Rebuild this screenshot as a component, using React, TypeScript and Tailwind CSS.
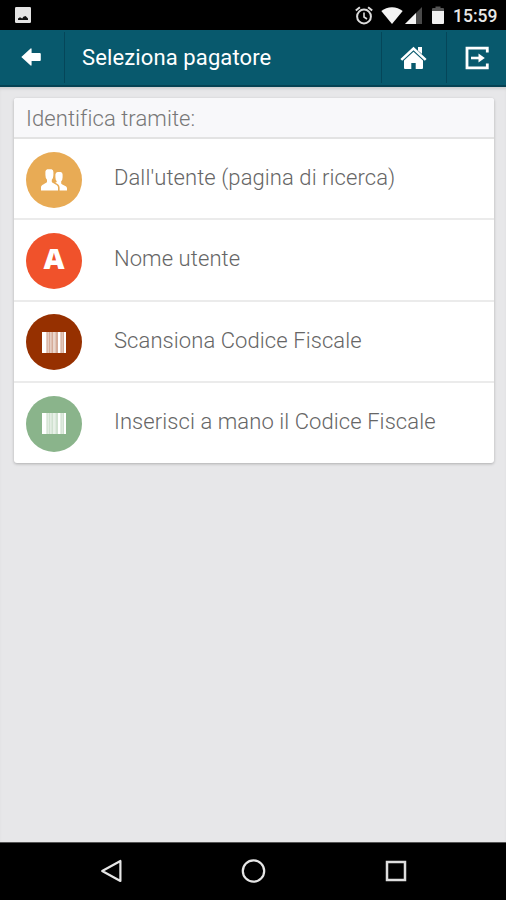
import type { ReactNode } from 'react';

const PictureIcon = () => (
  <svg className="w-4 h-4" viewBox="0 0 16 16">
    <rect width="16" height="16" rx="1.2" fill="#e4e4e4" />
    <path d="M3 13 V11.6 L5 10.2 L7.2 11.4 L8.4 9.8 L10.6 9 L13 11.6 V13 Z" fill="#111" />
  </svg>
);

const AlarmIcon = () => (
  <svg className="w-[18px] h-[19px]" viewBox="0 0 18 19" fill="none" stroke="#dcdcdc">
    <circle cx="9" cy="10.5" r="6.9" strokeWidth="2" />
    <path d="M9 6.5 V11 L12 13" strokeWidth="1.6" />
    <path d="M0.8 4.6 L4.9 1.2 M17.2 4.6 L13.1 1.2" strokeWidth="2" />
  </svg>
);

const WifiIcon = () => (
  <svg className="w-[22px] h-[17px]" viewBox="0 0 22 17">
    <path d="M11 17 L0.3 4 C3.2 1.6 7 0.2 11 0.2 C15 0.2 18.8 1.6 21.7 4 Z" fill="#f4f4f4" />
  </svg>
);

const SignalIcon = () => (
  <svg className="w-[17px] h-[17px]" viewBox="0 0 17 17">
    <path d="M17 0 V17 H0 Z" fill="#4a4a4a" />
    <path d="M11 6 V17 H0 Z" fill="#f4f4f4" />
  </svg>
);

const BatteryIcon = () => (
  <svg className="w-3 h-[18px]" viewBox="0 0 12 18">
    <path d="M3.5 0.5 H8.5 V2 H11 Q12 2 12 3 V5 H0 V3 Q0 2 1 2 H3.5 Z" fill="#555" />
    <path d="M0 5 H12 V17 Q12 18 11 18 H1 Q0 18 0 17 Z" fill="#f0f0f0" />
  </svg>
);

const BackIcon = () => (
  <svg className="w-5 h-[18px]" viewBox="0 0 20 18" fill="#fff">
    <path d="M0.3 9 L9.6 0.4 Q10.6 0 10.6 1.2 V5 H18.8 Q19.8 5 19.8 6 V12 Q19.8 13 18.8 13 H10.6 V16.8 Q10.6 18 9.6 17.6 Z" />
  </svg>
);

const HomeIcon = () => (
  <svg className="w-[27px] h-6" viewBox="0 0 27 24" fill="#fff">
    <path d="M13.5 0.8 L26.6 13 L24.8 14.8 L13.5 4.3 L2.2 14.8 L0.4 13 Z" />
    <path d="M18 1 H22 V8 L18 4.5 Z" />
    <path d="M4 14.4 L13.5 5.8 L23 14.4 V22 Q23 23 22 23 H15.7 V17 H11.3 V23 H5 Q4 23 4 22 Z" />
  </svg>
);

const ExitIcon = () => (
  <svg className="w-6 h-6" viewBox="0 0 24 24" fill="none" stroke="#fff">
    <path d="M22.3 6.5 V2.2 H2 V21.8 H22.3 V17.5" strokeWidth="2.8" />
    <path d="M6 12 H15.5" strokeWidth="2.6" />
    <path d="M13.5 7.6 L19.8 12 L13.5 16.4 Z" fill="#fff" stroke="none" />
  </svg>
);

const UsersIcon = () => (
  <svg className="w-[26px] h-[22px]" viewBox="0 0 26 22" fill="#fff">
    <path d="M6.2 0.2 H10.6 Q12.4 0.6 12.4 3 V6 Q12.4 9.4 10.8 10.8 V13 C11.4 14.6 17 15.4 17 18.4 V21.5 H0 V18.4 C0 15.4 5.4 14.6 6 13 V10.8 Q4.4 9.4 4.4 6 V2.6 Q4.6 0.8 6.2 0.2 Z" />
    <path d="M16.6 3 H19.6 Q21.6 3.4 21.6 5.6 V8.2 Q21.6 11 20.2 12.2 V14.4 C20.8 16 26 16.4 26 19.2 V21.5 H18.6 V18.4 C18.6 15.9 16.4 14.8 14.2 13.8 Q15.8 13.6 15.8 12.2 Q14.4 11 14.4 8.2 V5.4 Q14.6 3.4 16.6 3 Z" />
  </svg>
);

const BarcodeIcon = () => (
  <svg className="w-6 h-[21px]" viewBox="0 0 24 21" fill="#fff">
    <rect width="24" height="21" opacity="0.6" />
    <rect width="4.4" height="21" />
    <rect x="5.6" width="1.4" height="21" opacity="0.4" />
    <rect x="8" width="1.6" height="21" opacity="0.4" />
    <rect x="11" width="2.6" height="21" opacity="0.5" />
    <rect x="16" width="2.4" height="21" />
    <rect x="19.6" width="1.2" height="21" opacity="0.4" />
    <rect x="22" width="2" height="21" />
  </svg>
);

type Option = { label: string; color: string; icon: ReactNode };

const options: Option[] = [
  { label: "Dall'utente (pagina di ricerca)", color: 'bg-[#e8ab55]', icon: <UsersIcon /> },
  {
    label: 'Nome utente',
    color: 'bg-[#f0522b]',
    icon: <span className="font-['Open_Sans',sans-serif] text-[29px] leading-none font-extrabold -mt-1.5">A</span>,
  },
  { label: 'Scansiona Codice Fiscale', color: 'bg-[#963000]', icon: <BarcodeIcon /> },
  { label: 'Inserisci a mano il Codice Fiscale', color: 'bg-[#8ab48b]', icon: <BarcodeIcon /> },
];

const StatusBar = () => (
  <div className="h-[30px] bg-black flex items-center pl-[15px] pr-2.5 text-[#e8e8e8]">
    <PictureIcon />
    <div className="ml-auto flex items-center">
      <AlarmIcon />
      <div className="ml-2"><WifiIcon /></div>
      <div className="ml-0.5"><SignalIcon /></div>
      <div className="ml-2.5"><BatteryIcon /></div>
      <span className="ml-[9px] w-[43px] text-[17.5px] leading-none font-medium whitespace-nowrap pt-[3px]">15:59</span>
    </div>
  </div>
);

const AppBar = () => (
  <header className="h-[57px] bg-[#08596d] border-b-2 border-[#064253] flex text-white">
    <button className="w-[65px] my-0.5 pr-0.5 pb-0.5 flex items-center justify-center border-r border-[#054659]">
      <BackIcon />
    </button>
    <h1 className="flex-1 pl-[17px] pb-px flex items-center text-[22px] tracking-[0.12px] whitespace-nowrap">Seleziona pagatore</h1>
    <button className="w-[65px] my-0.5 pr-0.5 flex items-center justify-center border-l border-[#054659]">
      <HomeIcon />
    </button>
    <button className="w-[60px] my-0.5 flex items-center justify-center border-l border-[#054659]">
      <ExitIcon />
    </button>
  </header>
);

const NavBar = () => (
  <nav className="h-[58px] bg-black border-t border-[#555] pb-0.5 flex items-center">
    <svg className="ml-[100px] w-6 h-6" viewBox="0 0 24 24" fill="none" stroke="#e6e6e6" strokeWidth="2.2">
      <path d="M20.4 2 V22 L2.2 12 Z" strokeLinejoin="round" />
    </svg>
    <svg className="ml-[117px] w-[26px] h-[26px]" viewBox="0 0 26 26" fill="none" stroke="#e6e6e6" strokeWidth="2.2">
      <circle cx="12.5" cy="13" r="10.7" />
    </svg>
    <svg className="ml-[117px] w-6 h-6" viewBox="0 0 24 24" fill="none" stroke="#dedede" strokeWidth="2.5">
      <rect x="3" y="3" width="18" height="18" />
    </svg>
  </nav>
);

export default function App() {
  return (
    <div className="w-[506px] h-[900px] flex flex-col overflow-hidden bg-[#e7e7e9] font-['Roboto',sans-serif]">
      <StatusBar />
      <AppBar />

      <main className="flex-1 pt-[11px] pl-3.5 pr-3 shadow-[inset_0_3px_3px_-1px_#cfcfd1]">
        <section className="bg-white rounded-[3px] overflow-hidden shadow-[0_1px_3px_rgba(0,0,0,0.25)]">
          <h2 className="h-[41px] pt-0.5 pl-3 flex items-center bg-[#f8f8fa] border-b-2 border-[#e3e3e3] text-[22px] font-light tracking-[0.08px] text-[#777]">
            Identifica tramite:
          </h2>
          <ul className="divide-y-2 divide-[#ebebeb]">
            {options.map((option) => (
              <li key={option.label} className="h-[81.25px] pt-0.5 pl-3 flex items-center last:h-20">
                <div className={`w-14 h-14 rounded-full flex items-center justify-center text-white ${option.color}`}>
                  {option.icon}
                </div>
                <span className="ml-8 -mt-1 text-[22px] font-light tracking-[0.08px] text-[#666] whitespace-nowrap">
                  {option.label}
                </span>
              </li>
            ))}
          </ul>
        </section>
      </main>

      <NavBar />
    </div>
  );
}
